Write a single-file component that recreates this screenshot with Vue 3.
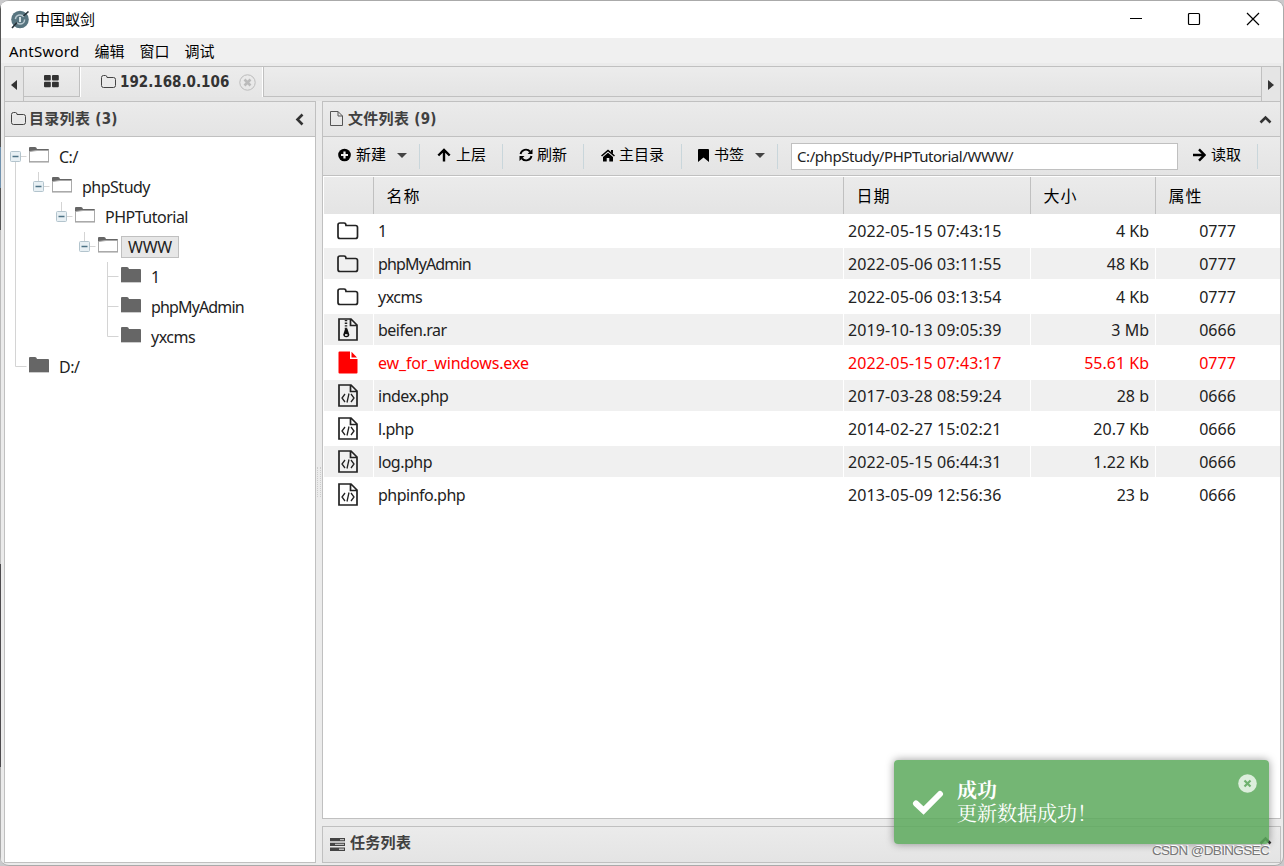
<script setup>
import { ref } from 'vue'

const menus = ['AntSword', '编辑', '窗口', '调试']

// guides: one entry per indent column, true draws the vertical line
const tree = [
  { name: 'C:/', guides: [], joint: 'first', open: true },
  { name: 'phpStudy', guides: [true], joint: 'only', open: true },
  { name: 'PHPTutorial', guides: [true, false], joint: 'only', open: true },
  { name: 'WWW', guides: [true, false, false], joint: 'only', open: true },
  { name: '1', guides: [true, false, false, false], joint: 'mid' },
  { name: 'phpMyAdmin', guides: [true, false, false, false], joint: 'mid' },
  { name: 'yxcms', guides: [true, false, false, false], joint: 'last' },
  { name: 'D:/', guides: [], joint: 'last' }
]
const selected = ref('WWW')

const files = [
  { name: '1', type: 'folder', date: '2022-05-15 07:43:15', size: '4 Kb', attr: '0777' },
  { name: 'phpMyAdmin', type: 'folder', date: '2022-05-06 03:11:55', size: '48 Kb', attr: '0777' },
  { name: 'yxcms', type: 'folder', date: '2022-05-06 03:13:54', size: '4 Kb', attr: '0777' },
  { name: 'beifen.rar', type: 'zip', date: '2019-10-13 09:05:39', size: '3 Mb', attr: '0666' },
  { name: 'ew_for_windows.exe', type: 'exe', date: '2022-05-15 07:43:17', size: '55.61 Kb', attr: '0777' },
  { name: 'index.php', type: 'code', date: '2017-03-28 08:59:24', size: '28 b', attr: '0666' },
  { name: 'l.php', type: 'code', date: '2014-02-27 15:02:21', size: '20.7 Kb', attr: '0666' },
  { name: 'log.php', type: 'code', date: '2022-05-15 06:44:31', size: '1.22 Kb', attr: '0666' },
  { name: 'phpinfo.php', type: 'code', date: '2013-05-09 12:56:36', size: '23 b', attr: '0666' }
]

const path = ref('C:/phpStudy/PHPTutorial/WWW/')
const toast = ref(true)

// mixed-case names run wide, so they are set tighter
const isWide = (name) => /[a-z][A-Z][a-z][A-Z]/.test(name)
</script>

<template>
  <div class="window">
    <header class="titlebar">
      <svg class="logo" width="20" height="20" viewBox="0 0 20 20">
        <circle cx="10" cy="9.5" r="8.8" fill="#587580" />
        <circle cx="10" cy="9.5" r="4.6" fill="none" stroke="#b9c9d0" stroke-width="1.5" stroke-dasharray="11 3.500" />
        <path d="M10 7v5" stroke="#d5e0e4" stroke-width="2" />
        <path d="M2 18L7 12.500M13.500 6L18.500 1.500" stroke="#253037" stroke-width="1.600" />
      </svg>
      <span class="app-name">中国蚁剑</span>
      <div class="win-buttons">
        <svg width="14" height="14" viewBox="0 0 14 14"><path d="M2 6.500h12" /></svg>
        <svg width="14" height="14" viewBox="0 0 14 14"><rect x="1.500" y="1.500" width="11" height="11" rx="1" /></svg>
        <svg width="14" height="14" viewBox="0 0 14 14"><path d="M1 1l12 12M13 1L1 13" /></svg>
      </div>
    </header>

    <nav class="menubar">
      <span v-for="m in menus" :key="m">{{ m }}</span>
    </nav>

    <div class="tabbar">
      <div class="scroll-btn left"><i class="arrow-left"></i></div>
      <div class="tabs">
        <div class="tab home">
          <svg width="15" height="13" viewBox="0 0 15 13" fill="#333">
            <rect width="6.800" height="5.500" rx="1" /><rect x="8" width="6.800" height="5.500" rx="1" />
            <rect y="6.800" width="6.800" height="5.500" rx="1" /><rect x="8" y="6.800" width="6.800" height="5.500" rx="1" />
          </svg>
        </div>
        <div class="tab active">
          <svg width="15" height="13" viewBox="0 0 15 13" fill="none" stroke="#444">
            <path d="M.5 10.500v-8q0-2 2-2h2q1.500 0 1.500 2h6.500q2 0 2 2v6q0 2-2 2h-10q-2 0-2-2z" />
          </svg>
          <b>192.168.0.106</b>
          <svg class="tab-close" width="17" height="17" viewBox="0 0 17 17" fill="none" stroke="#bbb">
            <circle cx="8.500" cy="8.500" r="7.700" />
            <path d="M5.500 5.500l6 6M11.500 5.500l-6 6" stroke-width="2.600" />
          </svg>
        </div>
        <div class="tab-rest"></div>
      </div>
      <div class="scroll-btn right"><i class="arrow-right"></i></div>
    </div>

    <main class="workspace">
      <section class="panel side">
        <div class="panel-head">
          <svg width="15" height="13" viewBox="0 0 15 13" fill="none" stroke="#444">
            <path d="M.5 10.500v-8q0-2 2-2h2q1.500 0 1.500 2h6.500q2 0 2 2v6q0 2-2 2h-10q-2 0-2-2z" />
          </svg>
          <b>目录列表 (3)</b>
          <svg class="collapse" width="9" height="13" viewBox="0 0 9 13"><path d="M7.500 1.500l-5 5 5 5" /></svg>
        </div>
        <div class="tree">
          <div v-for="(node, i) in tree" :key="i" class="node">
            <span v-for="(g, k) in node.guides" :key="k" class="guide">
              <svg width="23" height="30"><path v-if="g" d="M11.500 0v30" /></svg>
            </span>
            <svg class="joint" width="25" height="30" viewBox="0 0 25 30">
              <path v-if="node.joint === 'first'" d="M11.500 14v16M11.500 14.500h11" />
              <path v-else-if="node.joint === 'mid'" d="M11.500 0v30M11.500 14.500h11" />
              <path v-else d="M11.500 0v14.500h11" />
              <g v-if="node.open">
                <rect x="6.500" y="9.500" width="10" height="10" rx="1" fill="#e8f0f4" stroke="#b3c4cd" />
                <path d="M8.500 14.500h6" stroke="#4d7285" stroke-width="1.500" />
              </g>
            </svg>
            <svg class="folder" width="20" height="16" viewBox="0 0 20 16">
              <path d="M0 15V1q0-1 1-1h5q1.500 0 2 2h11q1 0 1 1v12z" fill="#666" />
              <path v-if="node.open" d="M.500 14.500V4.500L8 3.500h11.500v11z" fill="#fff" stroke="#aaa" />
              <path d="M0 15.500h20" stroke="#ccc" />
            </svg>
            <span
              class="label"
              :class="{ selected: node.name === selected, tight: isWide(node.name) }"
              @click="selected = node.name"
            >{{ node.name }}</span>
          </div>
        </div>
      </section>

      <div class="splitter"><i></i></div>

      <div class="content">
        <section class="panel files">
          <div class="panel-head">
            <svg width="13" height="15" viewBox="0 0 13 15" fill="none" stroke="#555">
              <path d="M.5.500h7.500l4.500 4.500v9.500H.500zM8 .500V5h4.500" />
            </svg>
            <b>文件列表 (9)</b>
            <svg class="collapse-up" width="13" height="9" viewBox="0 0 13 9"><path d="M1.500 7.500l5-5 5 5" /></svg>
          </div>

          <div class="toolbar">
            <div class="tool create">
              <svg width="13" height="14" viewBox="0 0 13 14">
                <circle cx="6.500" cy="7" r="6.300" /><path d="M6.500 3.500v7M3 7h7" stroke="#eee" stroke-width="2.200" />
              </svg>
              <span>新建</span><i class="caret"></i>
            </div>
            <div class="tool up">
              <svg width="14" height="14" viewBox="0 0 14 14"><path d="M1.300 7.500L7 2l5.700 5.500M7 2.500v11" fill="none" stroke="#000" stroke-width="2.400" /></svg>
              <span>上层</span>
            </div>
            <div class="tool refresh">
              <svg width="14" height="14" viewBox="0 0 14 14">
                <path d="M1.500 6A5.500 5.500 0 0 1 11 3.500M12.500 8A5.500 5.500 0 0 1 3 10.500" fill="none" stroke="#000" stroke-width="1.900" />
                <path d="M13.500 1v5h-5zM.500 13V8h5z" />
              </svg>
              <span>刷新</span>
            </div>
            <div class="tool root">
              <svg width="14" height="13" viewBox="0 0 14 13">
                <path d="M.5 7L7 1.500l6.500 5.500" fill="none" stroke="#000" stroke-width="1.600" />
                <path d="M2 7.900l5-4.200 5 4.200V12.500H8.300V9H5.700v3.500H2zM10 1h2v4l-2-1.500z" />
              </svg>
              <span>主目录</span>
            </div>
            <div class="tool bookmark">
              <svg width="11" height="13" viewBox="0 0 11 13"><path d="M0 1q0-1 1-1h9q1 0 1 1v12L5.500 8.500 0 13z" /></svg>
              <span>书签</span><i class="caret"></i>
            </div>
            <input v-model="path" class="path" type="text" spellcheck="false" />
            <div class="tool read">
              <svg width="13" height="14" viewBox="0 0 13 14"><path d="M6 1.300L11.500 7 6 12.700M0 7h11" fill="none" stroke="#000" stroke-width="2.400" /></svg>
              <span>读取</span>
            </div>
          </div>

          <div class="grid">
            <div class="row grid-head">
              <div></div><div>名称</div><div>日期</div><div>大小</div><div>属性</div>
            </div>
            <div v-for="f in files" :key="f.name" class="row" :class="{ danger: f.type === 'exe' }">
              <div class="cell icon">
                <svg v-if="f.type === 'folder'" width="22" height="18" viewBox="0 0 22 18">
                  <path d="M1 14.500V3q0-2 2-2h4q2 0 2 2.500h9.500q2 0 2 2v9q0 2-2 2H3q-2 0-2-2z" />
                </svg>
                <svg v-else width="20" height="23" viewBox="0 0 20 23">
                  <path v-if="f.type === 'exe'" class="solid" d="M.5 1.500q0-1 1-1H12V8h7.500v13.500q0 1-1 1h-17q-1 0-1-1zM13.500.800L19 6.500h-5.500z" />
                  <path v-else d="M1 1h12l6 6v15H1zM12.500 1v6.500H19" />
                  <path v-if="f.type === 'code'" class="code" d="M7 10l-3 4 3 4M13 10l3 4-3 4M11 9.500L9 18.500" />
                  <g v-if="f.type === 'zip'">
                    <path d="M8 2v9" stroke-width="2.500" stroke-dasharray="1.300 1.300" />
                    <path class="solid" d="M7 11h2.500l1.800 5.500a3 2.800 0 1 1-6 0z" />
                    <path d="M7 17h2.500" stroke="#f0f0f0" />
                  </g>
                </svg>
              </div>
              <div class="cell name" :class="{ tight: isWide(f.name) }">{{ f.name }}</div>
              <div class="cell date">{{ f.date }}</div>
              <div class="cell size">{{ f.size }}</div>
              <div class="cell attr">{{ f.attr }}</div>
            </div>
          </div>
        </section>

        <section class="panel tasks">
          <svg width="15" height="13" viewBox="0 0 15 13">
            <path d="M0 0h15v3.300H0zM0 4.800h15v3.300H0zM0 9.600h15v3.300H0z" fill="#444" />
            <path d="M10 1h4v1.300h-4zM5 5.800h9v1.300H5zM9 10.600h5v1.300H9z" fill="#bbb" />
          </svg>
          <b>任务列表</b>
          <svg class="collapse-up" width="13" height="9" viewBox="0 0 13 9"><path d="M1.500 7.500l5-5 5 5" /></svg>
        </section>
      </div>
    </main>

    <div v-if="toast" class="toast">
      <svg class="check" width="32" height="26" viewBox="0 0 32 26"><path d="M4 14.500l7.500 7L28 5" /></svg>
      <div class="toast-text">
        <b>成功</b>
        <span>更新数据成功！</span>
      </div>
      <svg class="toast-close" width="19" height="19" viewBox="0 0 19 19" @click="toast = false">
        <circle cx="9.500" cy="9.500" r="9.300" fill="#dceedc" />
        <path d="M6.500 6.500l6 6M12.500 6.500l-6 6" stroke="#6fb16f" stroke-width="2.200" />
      </svg>
    </div>
    <div class="watermark">CSDN @DBINGSEC</div>
  </div>
</template>

<style>
body {
  background: #c9c9cb;
  overflow: hidden;
}
</style>

<style scoped>
.window {
  position: relative;
  display: flex;
  flex-direction: column;
  width: 1284px;
  height: 866px;
  padding-left: 1px;
  box-sizing: border-box;
  border: 1px solid #aaa;
  border-left: 0;
  border-radius: 9px;
  overflow: hidden;
  background:
    linear-gradient(#555 146px, #7192ae 146px 187px, #555 187px 229px, #bbb 229px 563px, #4c4a4d 563px 766px, #aaa 766px) 0 0 / 1px 100% no-repeat,
    #ebebeb;
  color: #222;
  font: 16px/20px "Noto Sans", "Noto Sans CJK SC", sans-serif;
}

.titlebar {
  display: flex;
  align-items: center;
  flex: 0 0 37px;
  padding-left: 9px;
  background: #fff;
}

.app-name {
  margin: 0 0 2px 5px;
  font-size: 15px;
  color: #000;
}

.win-buttons {
  display: flex;
  gap: 45px;
  margin: 0 23px 1px auto;
}

.win-buttons svg {
  fill: none;
  stroke: #000;
  stroke-width: 1.2;
}

.menubar {
  display: flex;
  align-items: center;
  gap: 15px;
  flex: 0 0 25px;
  padding: 1px 0 0 8px;
  box-sizing: border-box;
  background: #f0f0f0;
  font-size: 15px;
  color: #000;
}

.menubar span:first-child {
  letter-spacing: .25px;
}

.tabbar {
  display: flex;
  flex: 0 0 35px;
  margin: 3px 2px 0 3px;
  box-sizing: border-box;
  border: 1px solid #c0c0c0;
  border-bottom: 0;
  background: #e5e5e5;
}

.scroll-btn {
  display: flex;
  align-items: center;
  justify-content: center;
  width: 18px;
  padding-top: 2px;
}

.scroll-btn.left {
  border-right: 1px solid #c0c0c0;
}

.scroll-btn.right {
  border-left: 1px solid #c0c0c0;
}

.arrow-left,
.arrow-right {
  border: 5px solid transparent;
  border-left-width: 0;
  border-right: 6px solid #333;
}

.arrow-right {
  border-right: 0;
  border-left: 6px solid #333;
}

.tabs {
  display: flex;
  flex: 1;
  height: 30px;
}

.tab {
  display: flex;
  align-items: center;
  box-sizing: border-box;
}

.home {
  justify-content: center;
  width: 56px;
  border-right: 1px solid #c0c0c0;
  border-bottom: 1px solid #c0c0c0;
  background: linear-gradient(#ececec, #e4e4e4);
}

.active {
  width: 183px;
  padding-left: 20px;
  border-left: 1px solid #fff;
  background: linear-gradient(#ececec, #e6e6e6);
  box-shadow: inset -1px 0 #fff;
}

.active svg:first-child {
  margin-bottom: 2px;
}

.active b {
  margin: 0 0 1px 4px;
  font: bold 15px/20px "DejaVu Sans Condensed", "DejaVu Sans", sans-serif;
  color: #333;
}

.tab-close {
  margin-left: 10px;
}

.tab-rest {
  flex: 1;
  box-sizing: border-box;
  border-left: 1px solid #c0c0c0;
  border-bottom: 1px solid #c0c0c0;
  background: linear-gradient(#ececec, #e4e4e4);
}

.workspace {
  display: flex;
  flex: 1;
  margin: 0 2px 2px 3px;
  min-height: 0;
}

.panel {
  box-sizing: border-box;
  border: 1px solid #c0c0c0;
  background: #fff;
}

.side {
  width: 312px;
}

.panel-head {
  display: flex;
  align-items: center;
  height: 34px;
  padding: 0 6px;
  border-bottom: 1px solid #c0c0c0;
  background: linear-gradient(#ebebeb, #e4e4e4);
  color: #404040;
}

.panel-head b,
.tasks b {
  margin: 0 0 1px 4px;
  font: bold 15px/20px "DejaVu Sans Condensed", "Noto Sans CJK SC", sans-serif;
  letter-spacing: .3px;
}

.side .panel-head b {
  margin-left: 3px;
}

.side .panel-head svg:first-child {
  margin-bottom: 2px;
}

.files .panel-head {
  padding-left: 7px;
}

.files .panel-head svg:first-child {
  margin-bottom: 1px;
}

.files .panel-head b {
  margin-left: 5px;
}

.collapse,
.collapse-up {
  margin-left: auto;
  fill: none;
  stroke: #333;
  stroke-width: 2.6;
}

.collapse {
  margin-right: 5px;
}

.collapse-up {
  margin-right: 2px;
}

.tree {
  padding-top: 5px;
}

.node {
  display: flex;
  align-items: center;
  height: 30px;
}

.guide,
.joint {
  flex: none;
  height: 30px;
}

.guide svg {
  display: block;
}

.guide path,
.joint > path {
  fill: none;
  stroke: #d4d4d4;
}

.guide {
  width: 23px;
}

.joint {
  margin-left: -1px;
}

.guide:first-child {
  margin-left: -1px;
}

.guide + .joint {
  margin-left: 0;
}

.folder {
  margin-bottom: 4px;
}

.label {
  margin-left: 3px;
  padding: 0 6px;
  border: 1px solid transparent;
  letter-spacing: -.5px;
}

.label.selected {
  border-color: #c0c0c0;
  background: #e7e7e7;
  letter-spacing: -.2px;
}

.splitter {
  display: flex;
  align-items: center;
  justify-content: center;
  width: 6px;
}

.splitter i {
  width: 2px;
  height: 30px;
  border-left: 1px dotted #ccc;
  border-right: 1px dotted #ccc;
}

.content {
  display: flex;
  flex-direction: column;
  flex: 1;
  gap: 7px;
  min-width: 0;
}

.files {
  flex: 1;
}

.toolbar {
  display: flex;
  align-items: center;
  height: 38px;
  border-bottom: 1px solid #c0c0c0;
  background: linear-gradient(#ebebeb, #e4e4e4);
  color: #000;
}

.tool {
  display: flex;
  align-items: center;
  height: 25px;
  padding-bottom: 2px;
  box-sizing: border-box;
  border-right: 1px solid #c9d6db;
  font-size: 15px;
}

.tool svg {
  margin-right: 5px;
}

.tool span {
  margin-bottom: 2px;
}

.create {
  width: 97px;
  padding-left: 15px;
}

.up {
  width: 83px;
  padding-left: 17px;
}

.refresh {
  width: 81px;
  padding-left: 16px;
}

.refresh svg {
  margin-right: 4px;
}

.root {
  width: 98px;
  padding-left: 17px;
}

.root svg {
  margin-right: 4px;
}

.bookmark {
  width: 96px;
  padding-left: 16px;
}

.read {
  width: 80px;
  padding-left: 15px;
}

.caret {
  margin: 1px 0 0 11px;
  border: 5px solid transparent;
  border-top-color: #444;
  border-bottom: 0;
}

.path {
  width: 387px;
  height: 27px;
  margin: 1px 0 0 13px;
  padding: 0 5px 2px;
  box-sizing: border-box;
  border: 1px solid #c0c0c0;
  outline: 0;
  background: #fff;
  color: #222;
  font: 15px/23px "Noto Sans", sans-serif;
  letter-spacing: -.43px;
}

.grid {
  padding: 1px 0 0 1px;
}

.row {
  display: grid;
  grid-template-columns: 50px 470px 187px 125px 1fr;
  height: 31px;
  margin-bottom: 2px;
}

.grid-head {
  height: 37px;
  margin-bottom: 1px;
  background: linear-gradient(#ebebeb, #e4e4e4);
  color: #000;
}

.grid-head div {
  display: flex;
  align-items: center;
  padding-left: 12.5px;
  border-right: 1px solid #c0c0c0;
  letter-spacing: 1px;
}

.grid-head div:last-child {
  border-right: 0;
}

.cell {
  display: flex;
  align-items: center;
  padding-left: 4px;
  border-right: 1px solid #fff;
}

.row:nth-child(odd) .cell {
  background: #f0f0f0;
}

.name {
  letter-spacing: -.5px;
}

.danger .name {
  letter-spacing: -.15px;
}

.name.tight,
.label.tight {
  letter-spacing: -.85px;
}

.date {
  letter-spacing: .12px;
}

.icon {
  justify-content: center;
  padding: 0 1px 0 0;
}

.icon svg {
  fill: none;
  stroke: #222;
  stroke-width: 1.7;
}

.icon .solid {
  fill: #111;
  stroke: none;
}

.icon .code {
  stroke-width: 1.3;
}

.danger {
  color: #f00;
}

.danger .icon .solid {
  fill: #f00;
}

.size {
  justify-content: flex-end;
  padding: 0 6px 0 0;
}

.attr {
  justify-content: center;
  padding: 0 1px 0 0;
  border-right: 0;
}

.tasks {
  display: flex;
  align-items: center;
  flex: 0 0 37px;
  padding: 0 7px;
  background: linear-gradient(#ebebeb, #e4e4e4);
  color: #404040;
}

.tasks svg:first-child {
  margin-bottom: 1px;
}

.tasks b {
  margin: 0 0 3px 5px;
}

.tasks .collapse-up {
  margin: 0 1px 9px auto;
}

.toast {
  position: absolute;
  right: 14px;
  bottom: 21px;
  display: flex;
  align-items: center;
  width: 375px;
  height: 84px;
  padding: 0 12px 0 18px;
  box-sizing: border-box;
  border-radius: 4px;
  background: rgba(92, 169, 92, .85);
  box-shadow: 0 0 9px rgba(0, 0, 0, .4);
  color: #fff;
  font: 20px/23px "Noto Serif CJK SC", "Noto Sans CJK SC", serif;
}

.check {
  fill: none;
  stroke: #fff;
  stroke-width: 6;
  stroke-linecap: round;
}

.toast-text {
  display: flex;
  flex-direction: column;
  margin: 0 0 2px 13px;
}

.toast-close {
  align-self: flex-start;
  margin: 14px 0 0 auto;
}

.watermark {
  position: absolute;
  right: 14px;
  bottom: 6px;
  font: 13.5px/16px "Liberation Sans", sans-serif;
  letter-spacing: -.65px;
  color: #777;
  text-shadow: 1px -1px #fff;
}
</style>
